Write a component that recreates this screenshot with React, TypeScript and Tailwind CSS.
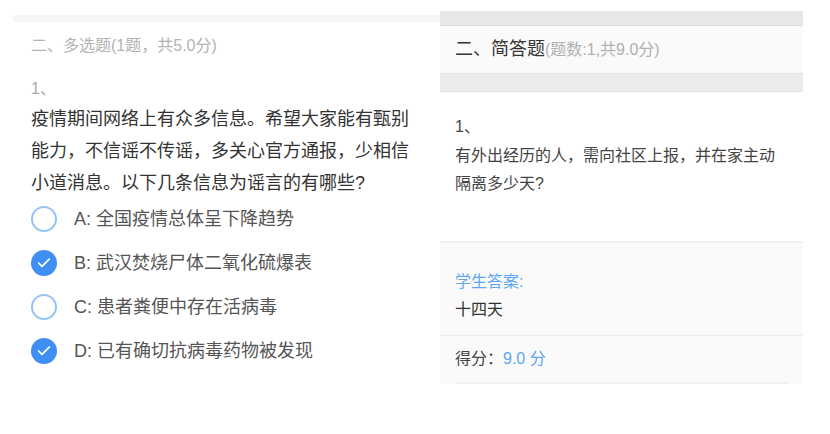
import { Check } from "lucide-react"

const font = { fontFamily: '"Liberation Sans", "Noto Sans CJK SC", sans-serif' }

const options = [
  { key: "A", text: "全国疫情总体呈下降趋势", checked: false },
  { key: "B", text: "武汉焚烧尸体二氧化硫爆表", checked: true },
  { key: "C", text: "患者粪便中存在活病毒", checked: false },
  { key: "D", text: "已有确切抗病毒药物被发现", checked: true },
]

const OptionRow = ({ label, text, checked }: { label: string; text: string; checked: boolean }) => (
  <div className="flex h-[44px] items-center">
    {checked ? (
      <span className="flex h-[26px] w-[26px] items-center justify-center rounded-full bg-[#3f8ff2]">
        <Check className="h-[16px] w-[16px] text-white" strokeWidth={2.6} />
      </span>
    ) : (
      <span className="h-[26px] w-[26px] rounded-full border-2 border-[#96c4f6]" />
    )}
    <span className="ml-[17px] text-[18px] text-[#555]">
      {label}: {text}
    </span>
  </div>
)

const App = () => {
  return (
    <div className="flex h-[434px] w-[830px] bg-white" style={font}>
      {/* multiple choice */}
      <div className="w-[440px] pl-[13px] pt-[15px]">
        <div className="h-[7px] bg-[#f6f6f6]" />
        <div className="pl-[18px]">
          <div className="mt-[15px] text-[16px] leading-[18px] text-[#b3b3b3]">二、多选题(1题，共5.0分)</div>
          <div className="mt-[25px] text-[16px] leading-[18px] text-[#ababab]">1、</div>
          <div className="mt-[5px] w-[390px] text-[18px] leading-[32px] text-[#333]">
            疫情期间网络上有众多信息。希望大家能有甄别能力，不信谣不传谣，多关心官方通报，少相信小道消息。以下几条信息为谣言的有哪些?
          </div>
          <div className="-mt-[2px]">
            {options.map((o) => (
              <OptionRow key={o.key} label={o.key} text={o.text} checked={o.checked} />
            ))}
          </div>
        </div>
      </div>

      {/* short answer */}
      <div className="w-[363px] pt-[11px]">
        <div className="h-[15px] border-b border-[#dcdcdc] bg-[#e7e7e7]" />
        <div className="flex h-[47px] items-center bg-[#fafafa] pl-[15px]">
          <span className="text-[18px] text-[#333]">二、简答题</span>
          <span className="text-[16px] text-[#b0b0b0]">(题数:1,共9.0分)</span>
        </div>
        <div className="h-[19px] border-y border-[#e2e2e2] bg-[#ebebeb]" />
        <div className="px-[15px] pt-[25px]">
          <div className="text-[16px] leading-[20px] text-[#444]">1、</div>
          <div className="mt-[5px] text-[16px] leading-[28px] text-[#444]">
            有外出经历的人，需向社区上报，并在家主动
            <br />
            隔离多少天?
          </div>
        </div>
        <div className="mt-[43px] border-t-2 border-[#f0f0f0] bg-[#fafafa]">
          <div className="px-[15px] pb-[12px] pt-[26px]">
            <div className="text-[16px] leading-[26px] text-[#5ea6f4]">学生答案:</div>
            <div className="mt-[2px] text-[16px] leading-[26px] text-[#333]">十四天</div>
          </div>
          <div className="border-t border-[#ececec]" />
          <div className="flex h-[46px] items-center px-[15px] text-[16px]">
            <span className="text-[#444]">得分：</span>
            <span className="text-[#5ea6f4]">9.0 分</span>
          </div>
          <div className="mx-[15px] border-t-2 border-[#efefef]" />
        </div>
      </div>
    </div>
  )
}

export default App
